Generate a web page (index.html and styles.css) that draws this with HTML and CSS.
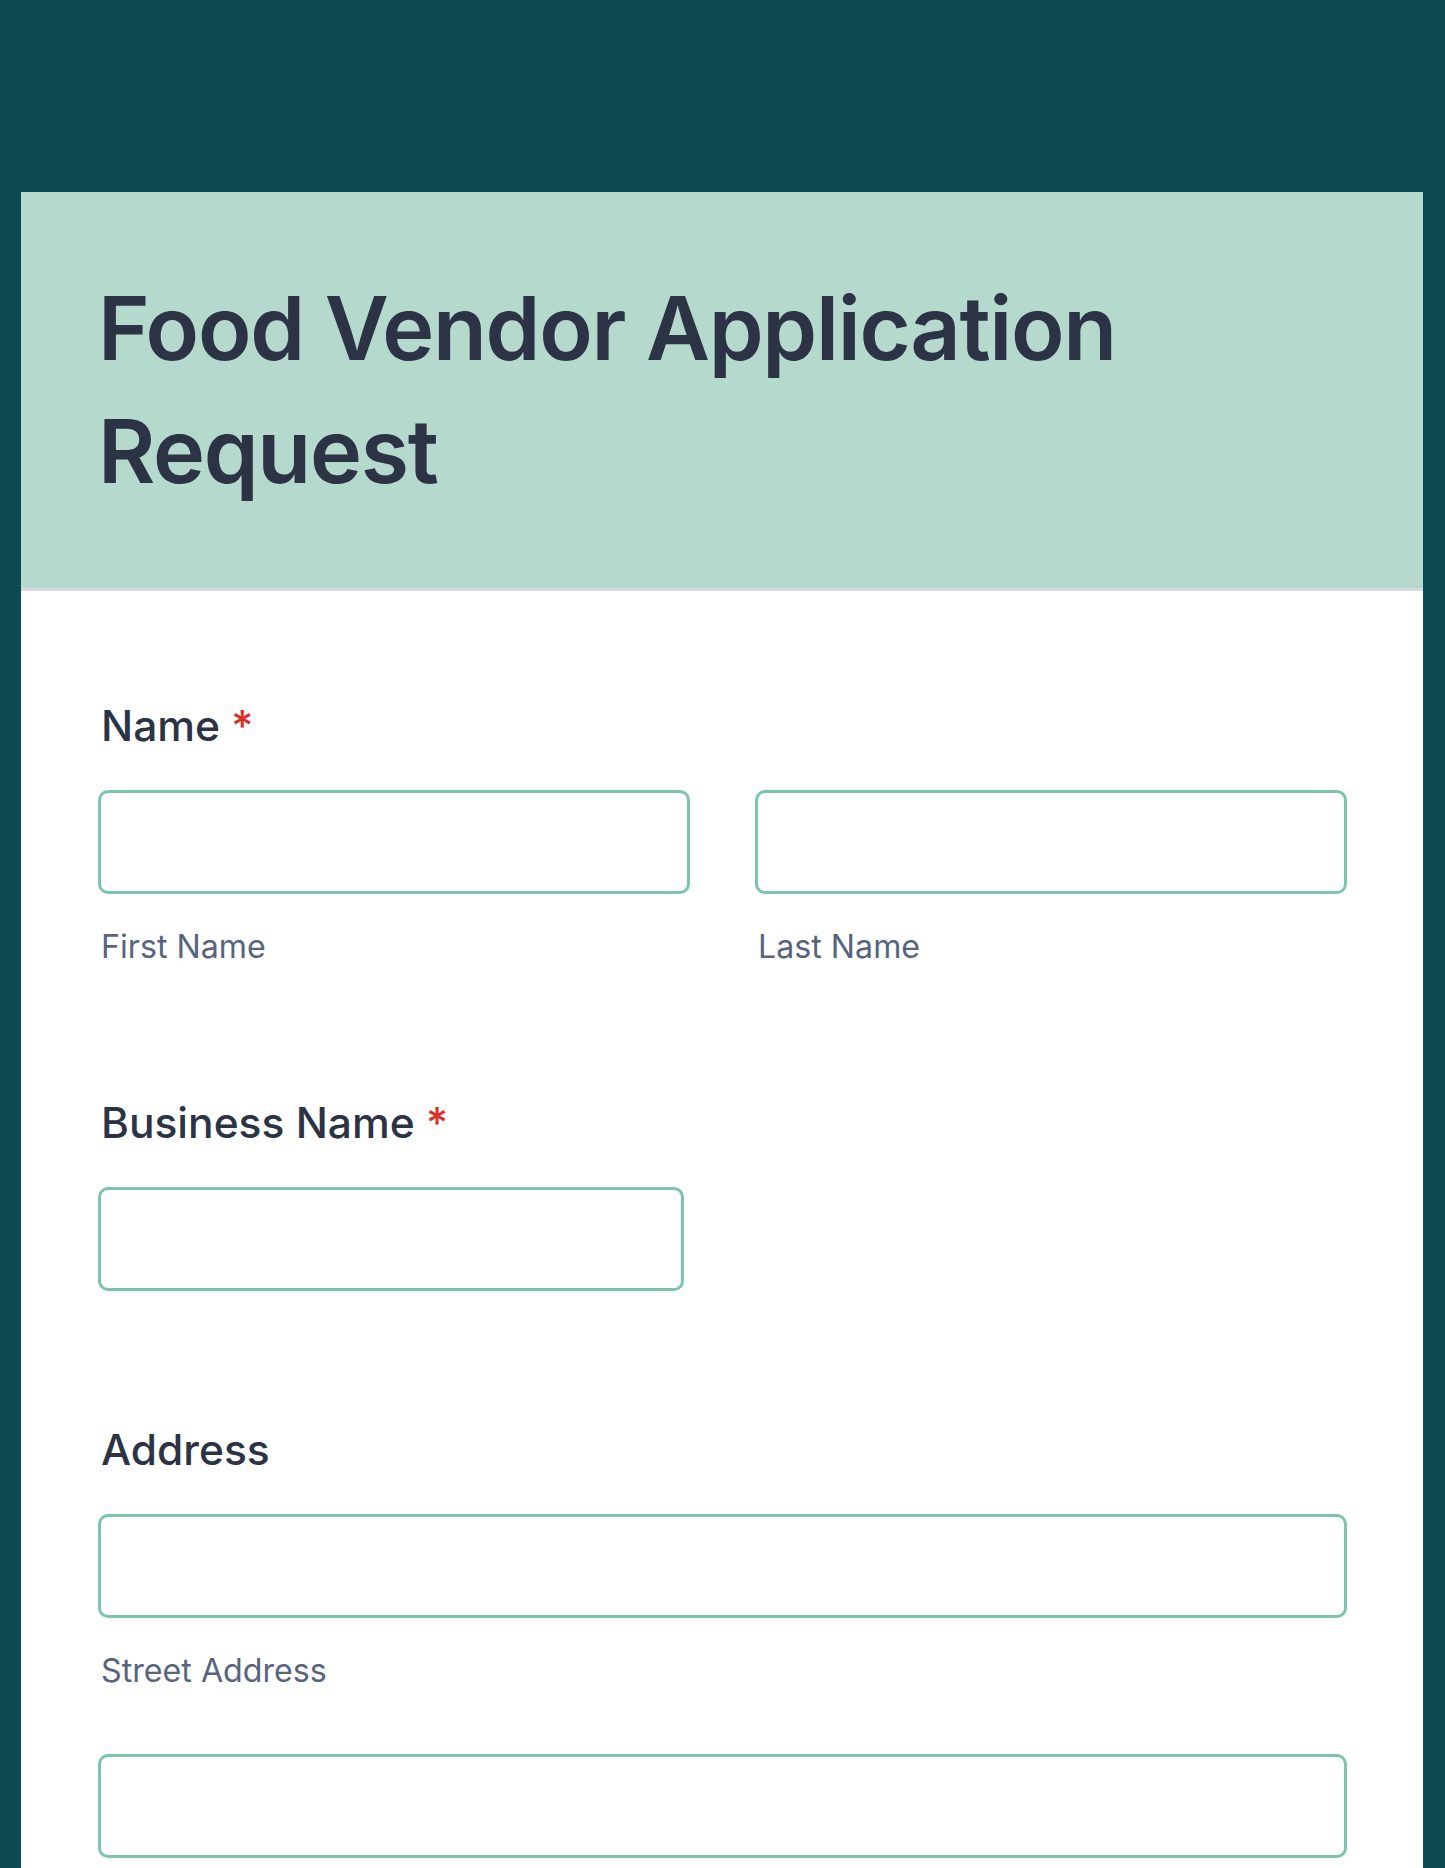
FILE: index.html
```html
<!DOCTYPE html>
<html lang="en">
<head>
    <meta charset="UTF-8">
    <meta name="viewport" content="width=device-width, initial-scale=1.0">
    <title>Food Vendor Application Request</title>
    <link rel="stylesheet" href="styles.css">
</head>
<body>
    <div class="form-card">
        <div class="form-header">
            <h1 class="form-title">Food Vendor Application Request</h1>
        </div>

        <form class="form-body">
            <div class="field">
                <label class="field-label">Name <span class="required">*</span></label>
                <div class="field-row">
                    <div class="sub-field">
                        <input type="text" class="text-input" id="first-name">
                        <label class="sub-label" for="first-name">First Name</label>
                    </div>
                    <div class="sub-field">
                        <input type="text" class="text-input" id="last-name">
                        <label class="sub-label" for="last-name">Last Name</label>
                    </div>
                </div>
            </div>

            <div class="field no-sub">
                <label class="field-label" for="business">Business Name <span class="required">*</span></label>
                <input type="text" class="text-input short" id="business">
            </div>

            <div class="field">
                <label class="field-label">Address</label>
                <div class="sub-field">
                    <input type="text" class="text-input" id="street">
                    <label class="sub-label" for="street">Street Address</label>
                </div>
                <div class="sub-field address-line">
                    <input type="text" class="text-input" id="street-2">
                </div>
            </div>
        </form>
    </div>
</body>
</html>
```

FILE: styles.css
```css
body {
    font-family: Inter, "Noto Sans", sans-serif;
    margin: 0;
    padding: 192px 22px 40px 21px;
    background-color: #0d4953;
    color: #2c3345;
}

.form-card {
    background: white;
}

.form-header {
    background: #b5d9cd;
    padding: 75px 80px 75px 77px;
    border-bottom: 3px solid #d3dbde;
}

.form-title {
    margin: 0;
    font-size: 88px;
    line-height: 123px;
    font-weight: 600;
    color: #2c3345;
    letter-spacing: -1.3px;
}

.form-body {
    padding: 106px 76px 60px 77px;
    display: flex;
    flex-direction: column;
    gap: 125px;
}

.field.no-sub {
    padding-bottom: 5px;
}

.field-label {
    display: block;
    font-size: 42.5px;
    line-height: 57px;
    font-weight: 500;
    padding-left: 3px;
    margin-bottom: 36px;
}

.required {
    color: #d9302a;
}

.field-row {
    display: grid;
    grid-template-columns: 1fr 1fr;
    gap: 65px;
}

.text-input {
    display: block;
    box-sizing: border-box;
    width: 100%;
    height: 104px;
    border: 3px solid #7ac5ac;
    border-radius: 10px;
    background: white;
    font-size: 32px;
    padding: 0 20px;
    outline: none;
}

.text-input.short {
    width: 586px;
}

.sub-label {
    display: block;
    margin-top: 31px;
    font-size: 32.2px;
    line-height: 44px;
    color: #57647e;
    padding-left: 3px;
}

.address-line {
    margin-top: 61px;
}
```
